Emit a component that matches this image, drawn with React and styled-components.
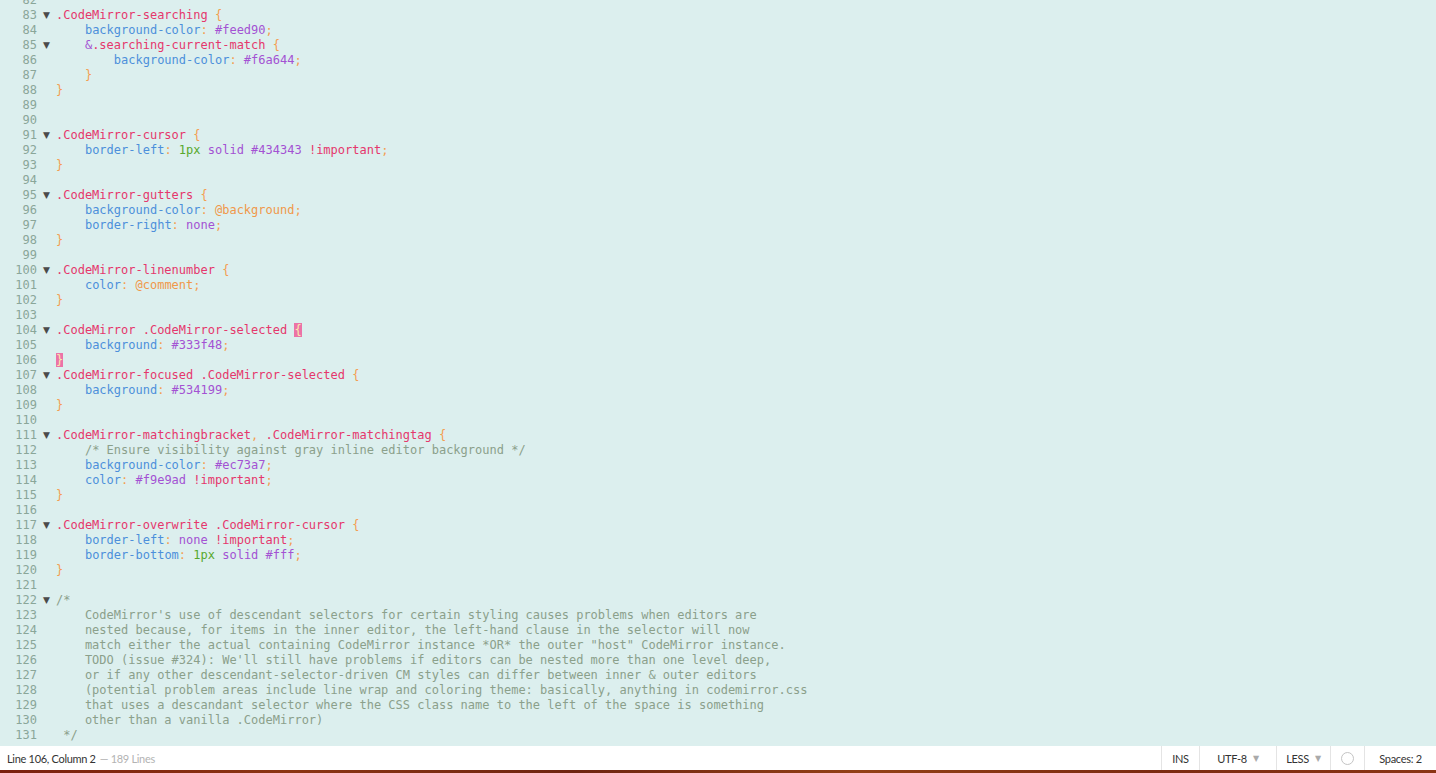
import React from "react";
import styled, { createGlobalStyle, css } from "styled-components";

const Global = createGlobalStyle`
  html, body { margin: 0; padding: 0; background: #dcefee; }
  #root { height: 773px; overflow: hidden; }
`;

const Shell = styled.div`
  display: flex;
  flex-direction: column;
  width: 1436px;
  height: 773px;
  overflow: hidden;
`;

const Editor = styled.div`
  height: 746px;
  background: #dcefee;
  overflow: hidden;
  font-family: "DejaVu Sans Mono", "Liberation Mono", monospace;
  font-size: 12px;
  line-height: 15px;
`;

const Lines = styled.div`
  margin-top: -7px;
  display: flex;
  flex-direction: column;
`;

const Row = styled.div`
  display: grid;
  grid-template-columns: 38px 18px 1fr;
  height: 15px;
  white-space: pre;
`;

const LineNo = styled.span`
  text-align: right;
  padding-right: 1px;
  color: #8aa699;
`;

const Fold = styled.span`
  color: #4a4a4a;
  font-size: 9px;
  padding-left: 5px;
  font-family: "DejaVu Sans", sans-serif;
`;

const colors = {
  sel: "#e5376c",
  prop: "#4d8fdb",
  val: "#a352d3",
  num: "#57a82c",
  imp: "#e5376c",
  var: "#f0984a",
  pun: "#f49e52",
  com: "#8ba08b",
  plain: "#555",
};

const Tok = styled.span`
  color: ${(p) => colors[p.$t] || colors.plain};
  ${(p) =>
    p.$hl &&
    css`
      background: #ec73a7;
      color: #f9e9ad;
    `}
`;

const Code = styled.span`
  overflow: hidden;
`;

const Status = styled.div`
  height: 24px;
  background: #ffffff;
  display: flex;
  align-items: stretch;
  font-family: "Lato", "Open Sans", sans-serif;
  font-size: 11px;
  letter-spacing: -0.3px;
  color: #333;
`;

const StatusLeft = styled.div`
  flex: 1;
  display: flex;
  align-items: center;
  padding-left: 7px;
`;

const Muted = styled.span`
  color: #b3b3b3;
  margin-left: 4px;
`;

const Segment = styled.div`
  width: ${(p) => p.$w}px;
  box-sizing: border-box;
  border-left: 1px solid #e4e4e4;
  display: flex;
  align-items: center;
  justify-content: center;
  gap: 6px;
`;

const Caret = styled.span`
  color: #aaa;
  font-size: 8px;
  font-family: "DejaVu Sans", sans-serif;
`;

const Ring = styled.span`
  width: 11px;
  height: 11px;
  border-radius: 50%;
  border: 1px solid #c4c4c4;
`;

const Strip = styled.div`
  height: 3px;
  background: linear-gradient(90deg, #7a1f0d 0%, #8c3412 20%, #6e2410 40%, #934016 60%, #7b2a10 80%, #8a3414 100%);
`;

const S = (t, s, hl) => ({ t, s, hl });
const sp = (n) => S("plain", " ".repeat(n));

const code = [
  [82, false, []],
  [83, true, [S("sel", ".CodeMirror-searching"), S("pun", " {")]],
  [84, false, [sp(4), S("prop", "background-color"), S("pun", ": "), S("val", "#feed90"), S("pun", ";")]],
  [85, true, [sp(4), S("val", "&"), S("sel", ".searching-current-match"), S("pun", " {")]],
  [86, false, [sp(8), S("prop", "background-color"), S("pun", ": "), S("val", "#f6a644"), S("pun", ";")]],
  [87, false, [sp(4), S("pun", "}")]],
  [88, false, [S("pun", "}")]],
  [89, false, []],
  [90, false, []],
  [91, true, [S("sel", ".CodeMirror-cursor"), S("pun", " {")]],
  [92, false, [sp(4), S("prop", "border-left"), S("pun", ": "), S("num", "1px"), sp(1), S("val", "solid #434343"), sp(1), S("imp", "!important"), S("pun", ";")]],
  [93, false, [S("pun", "}")]],
  [94, false, []],
  [95, true, [S("sel", ".CodeMirror-gutters"), S("pun", " {")]],
  [96, false, [sp(4), S("prop", "background-color"), S("pun", ": "), S("var", "@background"), S("pun", ";")]],
  [97, false, [sp(4), S("prop", "border-right"), S("pun", ": "), S("val", "none"), S("pun", ";")]],
  [98, false, [S("pun", "}")]],
  [99, false, []],
  [100, true, [S("sel", ".CodeMirror-linenumber"), S("pun", " {")]],
  [101, false, [sp(4), S("prop", "color"), S("pun", ": "), S("var", "@comment"), S("pun", ";")]],
  [102, false, [S("pun", "}")]],
  [103, false, []],
  [104, true, [S("sel", ".CodeMirror .CodeMirror-selected"), sp(1), S("pun", "{", true)]],
  [105, false, [sp(4), S("prop", "background"), S("pun", ": "), S("val", "#333f48"), S("pun", ";")]],
  [106, false, [S("pun", "}", true)]],
  [107, true, [S("sel", ".CodeMirror-focused .CodeMirror-selected"), S("pun", " {")]],
  [108, false, [sp(4), S("prop", "background"), S("pun", ": "), S("val", "#534199"), S("pun", ";")]],
  [109, false, [S("pun", "}")]],
  [110, false, []],
  [111, true, [S("sel", ".CodeMirror-matchingbracket"), S("pun", ", "), S("sel", ".CodeMirror-matchingtag"), S("pun", " {")]],
  [112, false, [sp(4), S("com", "/* Ensure visibility against gray inline editor background */")]],
  [113, false, [sp(4), S("prop", "background-color"), S("pun", ": "), S("val", "#ec73a7"), S("pun", ";")]],
  [114, false, [sp(4), S("prop", "color"), S("pun", ": "), S("val", "#f9e9ad"), sp(1), S("imp", "!important"), S("pun", ";")]],
  [115, false, [S("pun", "}")]],
  [116, false, []],
  [117, true, [S("sel", ".CodeMirror-overwrite .CodeMirror-cursor"), S("pun", " {")]],
  [118, false, [sp(4), S("prop", "border-left"), S("pun", ": "), S("val", "none"), sp(1), S("imp", "!important"), S("pun", ";")]],
  [119, false, [sp(4), S("prop", "border-bottom"), S("pun", ": "), S("num", "1px"), sp(1), S("val", "solid #fff"), S("pun", ";")]],
  [120, false, [S("pun", "}")]],
  [121, false, []],
  [122, true, [S("com", "/*")]],
  [123, false, [S("com", "    CodeMirror's use of descendant selectors for certain styling causes problems when editors are")]],
  [124, false, [S("com", "    nested because, for items in the inner editor, the left-hand clause in the selector will now")]],
  [125, false, [S("com", "    match either the actual containing CodeMirror instance *OR* the outer \"host\" CodeMirror instance.")]],
  [126, false, [S("com", "    TODO (issue #324): We'll still have problems if editors can be nested more than one level deep,")]],
  [127, false, [S("com", "    or if any other descendant-selector-driven CM styles can differ between inner & outer editors")]],
  [128, false, [S("com", "    (potential problem areas include line wrap and coloring theme: basically, anything in codemirror.css")]],
  [129, false, [S("com", "    that uses a descandant selector where the CSS class name to the left of the space is something")]],
  [130, false, [S("com", "    other than a vanilla .CodeMirror)")]],
  [131, false, [S("com", " */")]],
];

export default function App() {
  return (
    <Shell>
      <Global />
      <Editor>
        <Lines>
          {code.map(([n, fold, toks]) => (
            <Row key={n}>
              <LineNo>{n}</LineNo>
              <Fold>{fold ? "▼" : ""}</Fold>
              <Code>
                {toks.map((tk, i) => (
                  <Tok key={i} $t={tk.t} $hl={tk.hl}>
                    {tk.s}
                  </Tok>
                ))}
              </Code>
            </Row>
          ))}
        </Lines>
      </Editor>
      <Status>
        <StatusLeft>
          Line 106, Column 2<Muted>— 189 Lines</Muted>
        </StatusLeft>
        <Segment $w={38}>INS</Segment>
        <Segment $w={77}>
          UTF-8 <Caret>▼</Caret>
        </Segment>
        <Segment $w={54}>
          LESS <Caret>▼</Caret>
        </Segment>
        <Segment $w={34}>
          <Ring />
        </Segment>
        <Segment $w={72}>Spaces: 2</Segment>
      </Status>
      <Strip />
    </Shell>
  );
}
